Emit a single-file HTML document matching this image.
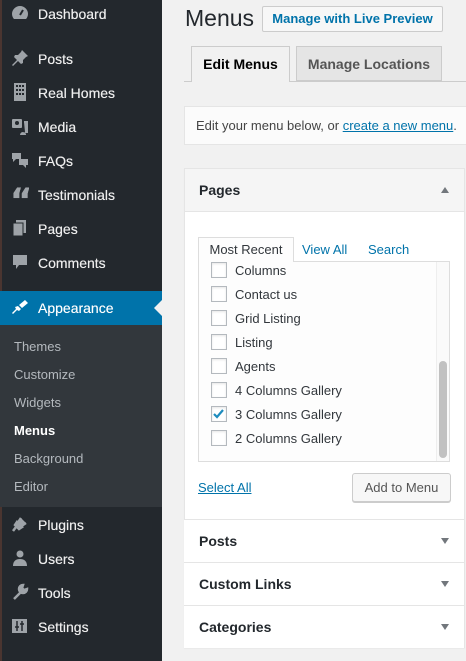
<!DOCTYPE html>
<html><head><style>
*{margin:0;padding:0;box-sizing:border-box}
body{width:466px;height:661px;overflow:hidden;background:#f1f1f1;font-family:"Liberation Sans",sans-serif;position:relative;color:#23282d}
#side{position:absolute;left:0;top:0;width:162px;height:661px;background:#23282d}
.mi{position:absolute;left:0;width:162px;height:34px;color:#eee;font-size:14px;line-height:34px;padding-left:38px;text-shadow:0 0 0.4px #eee}
.mi svg{position:absolute;left:11px;top:7px}
.sub{position:absolute;left:0;top:325px;width:162px;height:182px;background:#32373c}
.si{position:absolute;left:14px;font-size:13px;color:#b4b9be}
.main{position:absolute}
.cb{position:absolute;left:211px;width:16px;height:16px;border:1px solid #b4b9be;background:#fff;box-shadow:inset 0 1px 2px rgba(0,0,0,.1)}
.it{position:absolute;left:235px;font-size:13px;color:#32373c}
.acc{position:absolute;left:184px;width:280px;height:43px;border-top:1px solid #e5e5e5;background:#fff;font-size:14px;font-weight:bold;padding-left:15px;line-height:42px;color:#23282d}
.tri{position:absolute;right:15px;top:18px;width:0;height:0;border-left:4px solid transparent;border-right:4px solid transparent;border-top:6px solid #72777c}
</style></head><body>
<div id="side">
 <div style="position:absolute;left:0;top:0;width:2px;height:661px;background:#4a3530"></div>
 <div class="mi" style="top:-3px">Dashboard<svg width="18" height="18" viewBox="0 0 18 18"><path d="M9 2a8 8 0 0 0-8 8c0 2 1 4 2 5h12c1-1 2-3 2-5a8 8 0 0 0-8-8z" fill="#9ea3a8"/><path d="M9 11l3-5" stroke="#23282d" stroke-width="2"/></svg></div>
 <div class="mi" style="top:42px">Posts<svg width="18" height="18" viewBox="0 0 18 18"><path d="M11 1l6 6-2 1-3 3 0 3-2 1-3-3-5 5-1-1 5-5-3-3 1-2 3 0 3-3z" fill="#9ea3a8"/></svg></div>
 <div class="mi" style="top:76px">Real Homes<svg width="18" height="18" viewBox="0 0 18 18"><rect x="3" y="0" width="12" height="18" fill="#9ea3a8"/><g fill="#23282d"><rect x="5" y="2" width="2" height="2"/><rect x="8" y="2" width="2" height="2"/><rect x="11" y="2" width="2" height="2"/><rect x="5" y="6" width="2" height="2"/><rect x="8" y="6" width="2" height="2"/><rect x="11" y="6" width="2" height="2"/><rect x="5" y="10" width="2" height="2"/><rect x="8" y="10" width="2" height="2"/><rect x="11" y="10" width="2" height="2"/></g></svg></div>
 <div class="mi" style="top:110px">Media<svg width="18" height="18" viewBox="0 0 18 18"><rect x="1" y="2" width="10" height="9" rx="1" fill="#9ea3a8"/><circle cx="6" cy="6" r="2" fill="#23282d"/><path d="M13 5h3v10h-2M12 16a2 2 0 1 0 .1 0" stroke="#9ea3a8" stroke-width="2" fill="#9ea3a8"/></svg></div>
 <div class="mi" style="top:144px">FAQs<svg width="18" height="18" viewBox="0 0 18 18"><path d="M1 2h9v6H5l-3 3V8H1z" fill="#9ea3a8"/><path d="M8 8h9v6h-2v3l-3-3H8z" fill="#9ea3a8"/></svg></div>
 <div class="mi" style="top:178px">Testimonials<svg width="18" height="18" viewBox="0 0 18 18"><text x="-1" y="27" font-size="34" font-weight="bold" fill="#9ea3a8" font-family="DejaVu Sans">“</text></svg></div>
 <div class="mi" style="top:212px">Pages<svg width="18" height="18" viewBox="0 0 18 18"><rect x="5" y="1" width="10" height="13" fill="#9ea3a8"/><rect x="2" y="4" width="10" height="13" fill="#9ea3a8" stroke="#23282d"/></svg></div>
 <div class="mi" style="top:246px">Comments<svg width="18" height="18" viewBox="0 0 18 18"><path d="M2 2h14v10H8l-3 4v-4H2z" fill="#9ea3a8"/></svg></div>
 <div class="mi" style="top:291px;background:#0073aa;color:#fff">Appearance<svg width="18" height="18" viewBox="0 0 18 18"><path d="M14 2l3 3-6 5-3-3zM7 8l3 3-2 2-2-1-4 4-1-1 4-4-1-2z" fill="#fff"/></svg>
  <div style="position:absolute;right:0;top:9px;border-top:8px solid transparent;border-bottom:8px solid transparent;border-right:8px solid #f1f1f1"></div></div>
 <div class="sub">
  <div class="si" style="top:14px">Themes</div>
  <div class="si" style="top:42px">Customize</div>
  <div class="si" style="top:70px">Widgets</div>
  <div class="si" style="top:98px;color:#fff;font-weight:bold">Menus</div>
  <div class="si" style="top:126px">Background</div>
  <div class="si" style="top:154px">Editor</div>
 </div>
 <div class="mi" style="top:508px">Plugins<svg width="18" height="18" viewBox="0 0 18 18"><path d="M10 3l-2 3 4 4 3-2M6 7l5 5-3 2-4-4zM5 12l-3 4" stroke="#9ea3a8" stroke-width="2.5" fill="#9ea3a8"/></svg></div>
 <div class="mi" style="top:542px">Users<svg width="18" height="18" viewBox="0 0 18 18"><circle cx="9" cy="5" r="3.5" fill="#9ea3a8"/><path d="M2 17c0-5 3-7 7-7s7 2 7 7z" fill="#9ea3a8"/></svg></div>
 <div class="mi" style="top:576px">Tools<svg width="18" height="18" viewBox="0 0 18 18"><path d="M3 16l7-7M12 2a4 4 0 1 0 4 4l-3 1-2-2z" stroke="#9ea3a8" stroke-width="2.5" fill="#9ea3a8"/></svg></div>
 <div class="mi" style="top:610px">Settings<svg width="18" height="18" viewBox="0 0 18 18"><rect x="1" y="2" width="15" height="14" fill="#9ea3a8"/><path d="M6 4v10M11 4v10M4 10h4M9 7h4" stroke="#23282d" stroke-width="1.5"/></svg></div>
</div>

<div class="main" style="left:185px;top:5px;font-size:23px;color:#23282d">Menus</div>
<div class="main" style="left:262px;top:6px;width:181px;height:26px;border:1px solid #ccc;background:#f7f7f7;color:#0073aa;font-size:13px;font-weight:bold;text-align:center;line-height:24px;border-radius:2px">Manage with Live Preview</div>
<div class="main" style="left:184px;top:81px;width:282px;border-top:1px solid #ccc"></div>
<div class="main" style="left:191px;top:46px;width:99px;height:36px;border:1px solid #ccc;border-bottom:none;background:#f1f1f1;font-size:14px;font-weight:bold;color:#000;text-align:center;line-height:34px">Edit Menus</div>
<div class="main" style="left:296px;top:46px;width:146px;height:35px;border:1px solid #ccc;background:#e5e5e5;font-size:14px;font-weight:bold;color:#555;text-align:center;line-height:34px">Manage Locations</div>
<div class="main" style="left:184px;top:106px;width:290px;height:39px;background:#fbfbfb;border:1px solid #e5e5e5;font-size:13px;color:#444;padding-left:11px;line-height:38px;white-space:nowrap">Edit your menu below, or <span style="color:#0073aa;text-decoration:underline">create a new menu</span>.</div>

<div class="main" style="left:184px;top:168px;width:281px;height:480px;background:#fff;border:1px solid #e5e5e5;box-shadow:0 1px 1px rgba(0,0,0,.04)"></div>
<div class="main" style="left:185px;top:169px;width:279px;height:43px;background:#f5f5f5;border-bottom:1px solid #e5e5e5;font-size:14px;font-weight:bold;padding-left:14px;line-height:42px">Pages<div style="position:absolute;right:15px;top:18px;border-left:4px solid transparent;border-right:4px solid transparent;border-bottom:6px solid #72777c"></div></div>

<div class="main" style="left:198px;top:261px;width:252px;height:201px;border:1px solid #ddd;background:#fdfdfd"></div>
<div class="main" style="left:198px;top:237px;width:96px;height:25px;border:1px solid #ddd;border-bottom:none;background:#fdfdfd;font-size:13px;color:#32373c;text-align:center;line-height:24px">Most Recent</div>
<div class="main" style="left:302px;top:242px;font-size:13px;color:#0073aa">View All</div>
<div class="main" style="left:368px;top:242px;font-size:13px;color:#0073aa">Search</div>
<div class="main" style="left:436px;top:262px;width:13px;height:199px;border-left:1px solid #eee;background:#fafafa"></div>
<div class="main" style="left:439px;top:361px;width:8px;height:97px;border-radius:4px;background:#c1c1c1"></div>

<div class="cb" style="top:262px"></div><div class="it" style="top:263px">Columns</div>
<div class="cb" style="top:286px"></div><div class="it" style="top:287px">Contact us</div>
<div class="cb" style="top:310px"></div><div class="it" style="top:311px">Grid Listing</div>
<div class="cb" style="top:334px"></div><div class="it" style="top:335px">Listing</div>
<div class="cb" style="top:358px"></div><div class="it" style="top:359px">Agents</div>
<div class="cb" style="top:382px"></div><div class="it" style="top:383px">4 Columns Gallery</div>
<div class="cb" style="top:406px"><svg width="14" height="14" viewBox="0 0 14 14" style="position:absolute;left:0;top:0"><path d="M2 7l3 3 6-7" stroke="#1e8cbe" stroke-width="2.2" fill="none"/></svg></div><div class="it" style="top:407px">3 Columns Gallery</div>
<div class="cb" style="top:430px"></div><div class="it" style="top:431px">2 Columns Gallery</div>

<div class="main" style="left:198px;top:480px;font-size:13px;color:#0073aa;text-decoration:underline">Select All</div>
<div class="main" style="left:352px;top:473px;width:99px;height:29px;border:1px solid #ccc;border-radius:3px;background:#f7f7f7;box-shadow:0 1px 0 #ccc;font-size:13px;color:#555;text-align:center;line-height:27px">Add to Menu</div>

<div class="acc" style="top:519px">Posts<div class="tri"></div></div>
<div class="acc" style="top:562px">Custom Links<div class="tri"></div></div>
<div class="acc" style="top:605px">Categories<div class="tri"></div></div>
</body></html>
